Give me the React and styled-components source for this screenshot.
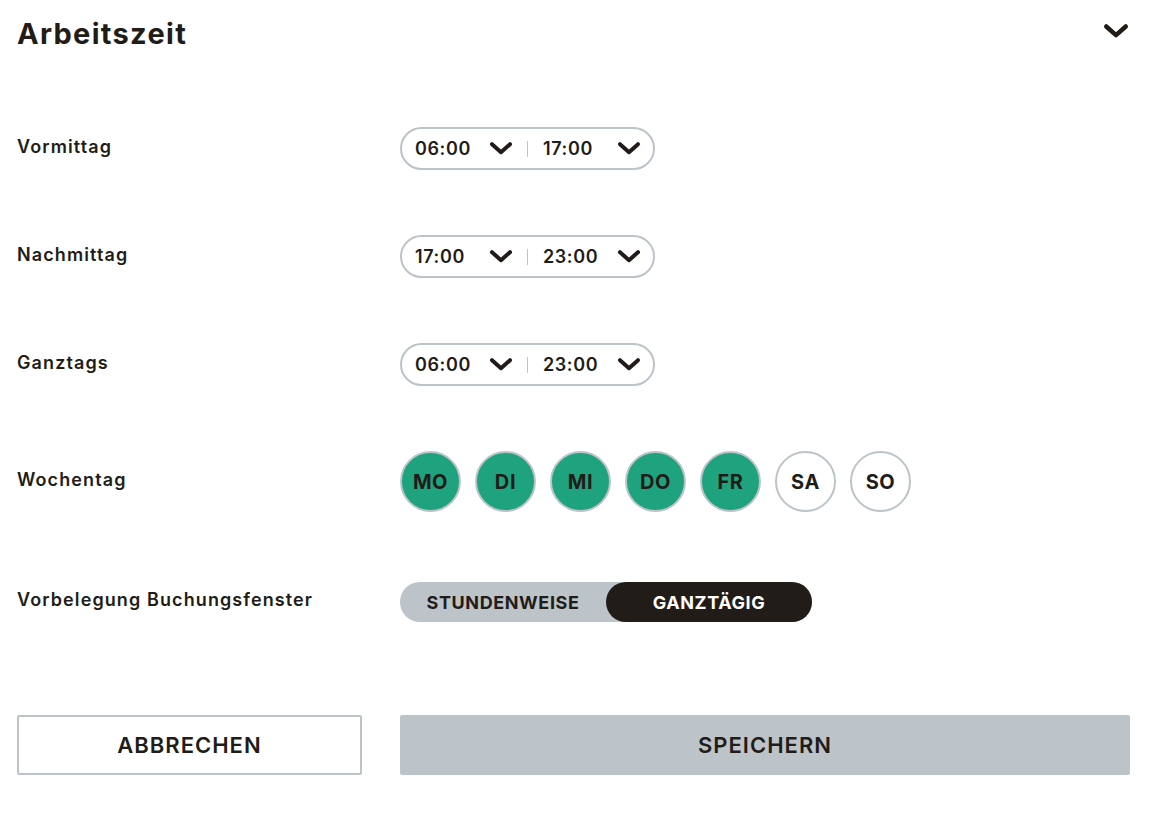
import React, { useState } from "react";
import styled, { createGlobalStyle } from "styled-components";

const GlobalStyle = createGlobalStyle`
  body {
    margin: 0;
    background: #ffffff;
    font-family: "Inter", "Open Sans", sans-serif;
    color: #221c18;
  }
`;

const dark = "#221c18";
const grey = "#bcc4ca";
const green = "#1fa27e";

// chevron icon
const Chevron = ({ size = 24, stroke = 4 }) => (
  <svg width={size} height={size * 0.6} viewBox="0 0 24 14" fill="none">
    <polyline
      points="3,3 12,11 21,3"
      stroke={dark}
      strokeWidth={stroke}
      strokeLinecap="round"
      strokeLinejoin="round"
    />
  </svg>
);

const Page = styled.div`
  padding: 0 27px 40px 17px;
`;

const Header = styled.div`
  display: flex;
  align-items: center;
  justify-content: space-between;
  height: 66px;
`;

const Title = styled.h1`
  margin: 0;
  font-size: 29px;
  font-weight: 700;
  letter-spacing: 1.3px;
`;

const Collapse = styled.div`
  display: flex;
  align-items: center;
  margin-right: 1px;
  margin-top: -4px;
`;

const Form = styled.div`
  display: flex;
  flex-direction: column;
  margin-top: 61px;
`;

const Row = styled.div`
  display: grid;
  grid-template-columns: 383px 1fr;
  align-items: center;
  height: ${(p) => p.h}px;
  margin-bottom: ${(p) => p.gap}px;
`;

const Label = styled.div`
  font-size: 18px;
  font-weight: 600;
  letter-spacing: 1.1px;
  margin-top: -5px;
`;

const TimePill = styled.div`
  display: flex;
  align-items: center;
  width: 255px;
  height: 43px;
  box-sizing: border-box;
  border: 2px solid ${grey};
  border-radius: 22px;
  padding: 0 12px 0 13px;
`;

const TimeSlot = styled.div`
  display: flex;
  align-items: center;
  justify-content: space-between;
  flex: 1;
  font-size: 18px;
  font-weight: 600;
  letter-spacing: 0.6px;
`;

const Divider = styled.div`
  width: 1px;
  height: 16px;
  background: ${grey};
  margin: 0 15px 0 14px;
`;

const Days = styled.div`
  display: flex;
  gap: 14px;
`;

const Day = styled.div`
  width: 61px;
  height: 61px;
  box-sizing: border-box;
  border-radius: 50%;
  border: 2px solid ${grey};
  background: ${(p) => (p.active ? green : "#ffffff")};
  display: flex;
  align-items: center;
  justify-content: center;
  font-size: 20px;
  font-weight: 700;
  letter-spacing: 0.6px;
`;

const Toggle = styled.div`
  display: flex;
  width: 412px;
  height: 40px;
  border-radius: 20px;
  background: ${grey};
`;

const ToggleOption = styled.div`
  flex: ${(p) => p.w};
  display: flex;
  align-items: center;
  justify-content: center;
  border-radius: 20px;
  font-size: 18px;
  font-weight: 700;
  letter-spacing: 0.6px;
  background: ${(p) => (p.active ? dark : "transparent")};
  color: ${(p) => (p.active ? "#ffffff" : dark)};
`;

const Actions = styled.div`
  display: grid;
  grid-template-columns: 345px 1fr;
  gap: 38px;
  margin-top: 93px;
`;

const Button = styled.button`
  height: 60px;
  box-sizing: border-box;
  border: 2px solid ${grey};
  border-radius: 2px;
  background: ${(p) => (p.primary ? grey : "#ffffff")};
  font-family: inherit;
  font-size: 22px;
  font-weight: 600;
  color: ${dark};
  letter-spacing: 1px;
`;

const TimeRange = ({ from, to }) => (
  <TimePill>
    <TimeSlot>
      {from}
      <Chevron />
    </TimeSlot>
    <Divider />
    <TimeSlot>
      {to}
      <Chevron />
    </TimeSlot>
  </TimePill>
);

const days = [
  { k: "MO", on: true },
  { k: "DI", on: true },
  { k: "MI", on: true },
  { k: "DO", on: true },
  { k: "FR", on: true },
  { k: "SA", on: false },
  { k: "SO", on: false },
];

export default function App() {
  const [mode, setMode] = useState("day");

  return (
    <Page>
      <GlobalStyle />
      <Header>
        <Title>Arbeitszeit</Title>
        <Collapse>
          <Chevron size={26} stroke={4.2} />
        </Collapse>
      </Header>

      <Form>
        <Row h={43} gap={65}>
          <Label>Vormittag</Label>
          <TimeRange from="06:00" to="17:00" />
        </Row>
        <Row h={43} gap={65}>
          <Label>Nachmittag</Label>
          <TimeRange from="17:00" to="23:00" />
        </Row>
        <Row h={43} gap={65}>
          <Label>Ganztags</Label>
          <TimeRange from="06:00" to="23:00" />
        </Row>
        <Row h={60} gap={71}>
          <Label>Wochentag</Label>
          <Days>
            {days.map((d) => (
              <Day key={d.k} active={d.on}>
                {d.k}
              </Day>
            ))}
          </Days>
        </Row>
        <Row h={40} gap={0}>
          <Label>Vorbelegung Buchungsfenster</Label>
          <Toggle>
            <ToggleOption w={206} active={mode === "hour"} onClick={() => setMode("hour")}>
              STUNDENWEISE
            </ToggleOption>
            <ToggleOption w={206} active={mode === "day"} onClick={() => setMode("day")}>
              GANZTÄGIG
            </ToggleOption>
          </Toggle>
        </Row>
      </Form>

      <Actions>
        <Button>ABBRECHEN</Button>
        <Button primary>SPEICHERN</Button>
      </Actions>
    </Page>
  );
}
